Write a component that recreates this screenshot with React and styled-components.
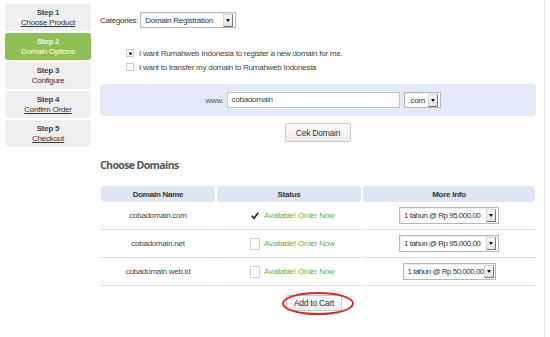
import React from 'react';
import styled, { createGlobalStyle } from 'styled-components';

const Global = createGlobalStyle`
  html, body { margin: 0; padding: 0; background: #fff; }
  body {
    font-family: "Liberation Sans", Arial, sans-serif;
    font-size: 8px;
    letter-spacing: -0.25px;
    color: #333;
  }
`;

const Page = styled.div`
  display: flex;
  width: 545px;
  height: 337px;
  border-right: 1px solid #e8e8e8;
  padding: 4px 0 0 5px;
  box-sizing: border-box;
  gap: 9px;
`;

const Sidebar = styled.div`
  width: 86px;
  display: flex;
  flex-direction: column;
  gap: 2px;
`;

const StepBox = styled.div`
  height: 27px;
  border-radius: 3px;
  background: ${(p) => (p.active ? '#8dbf55' : '#efefef')};
  color: ${(p) => (p.active ? '#fff' : '#333')};
  display: flex;
  flex-direction: column;
  align-items: center;
  justify-content: center;
  line-height: 10px;
  b { font-weight: bold; color: ${(p) => (p.active ? '#f3f9ea' : '#444')}; }
  span { text-decoration: ${(p) => (p.link ? 'underline' : 'none')}; }
`;

const Main = styled.div`
  width: 436px;
  display: flex;
  flex-direction: column;
`;

const CatRow = styled.div`
  display: flex;
  align-items: center;
  gap: 2px;
  margin-top: 8px;
  height: 16px;
`;

const SelectBox = styled.div`
  display: flex;
  align-items: center;
  justify-content: space-between;
  white-space: nowrap;
  width: ${(p) => p.w}px;
  height: ${(p) => p.h || 16}px;
  border: 1px solid #b8b8b8;
  background: #fff;
  box-sizing: border-box;
  padding-left: 4px;
  color: #333;
  letter-spacing: ${(p) => (p.tight ? '-0.5px' : 'inherit')};
  box-shadow: inset 1px 1px 0 #eee;
`;

const Arrow = styled.div`
  width: 8px;
  height: 11px;
  margin-right: 2px;
  flex-shrink: 0;
  background: linear-gradient(#fafafa, #e2e2e2);
  border: 1px solid #d6d6d6;
  border-right-color: #777;
  border-bottom-color: #777;
  display: flex;
  align-items: center;
  justify-content: center;
  &::after {
    content: '';
    border-left: 2px solid transparent;
    border-right: 2px solid transparent;
    border-top: 3px solid #111;
  }
`;

const Radios = styled.div`
  display: flex;
  flex-direction: column;
  gap: 4px;
  margin: 20px 0 0 26px;
`;

const RadioRow = styled.label`
  display: flex;
  align-items: center;
  gap: 5px;
  height: 10px;
  color: #444;
`;

const Radio = styled.span`
  width: 6px;
  height: 6px;
  border: 1px solid #c8c8c8;
  background: #fff;
  display: flex;
  align-items: center;
  justify-content: center;
  &::after {
    content: '';
    width: 3px;
    height: 3px;
    border-radius: 50%;
    background: ${(p) => (p.checked ? '#333' : 'transparent')};
  }
`;

const DomainBar = styled.div`
  margin-top: 12px;
  height: 32px;
  border-radius: 4px;
  background: #e4e9f6;
  display: flex;
  align-items: center;
  justify-content: center;
  gap: 3px;
  padding-left: 10px;
`;

const Www = styled.span`
  color: #555;
`;

const TextInput = styled.div`
  width: 173px;
  height: 16px;
  border: 1px solid #c4c4c4;
  background: #fff;
  box-sizing: border-box;
  padding: 2px 4px;
  color: #444;
  margin-right: 1px;
`;

const Button = styled.div`
  align-self: center;
  padding: 0 ${(p) => p.px || 10}px;
  height: ${(p) => p.h || 17}px;
  border: 1px solid #c8c8c8;
  border-radius: 2px;
  background: linear-gradient(#fdfdfd, #ececec);
  display: flex;
  align-items: center;
  color: #333;
  font-size: 8.5px;
`;

const Heading = styled.h2`
  margin: 16px 0 0 0;
  font-family: "Open Sans", sans-serif;
  font-size: 10.5px;
  font-weight: bold;
  color: #555;
  letter-spacing: -0.6px;
  line-height: 14px;
`;

const Table = styled.div`
  margin-top: 14px;
  display: grid;
  grid-template-columns: 114px 144px 172px;
  column-gap: 2px;
  padding-left: 1px;
`;

const Th = styled.div`
  height: 16px;
  border-radius: 3px;
  background: #dfe6f3;
  display: flex;
  align-items: center;
  justify-content: center;
  font-weight: bold;
  color: #333;
`;

const Td = styled.div`
  height: 27px;
  border-bottom: 1px solid #dcdcdc;
  display: flex;
  align-items: center;
  justify-content: center;
  gap: 4px;
  color: #444;
`;

const StatusCell = styled(Td)`
  justify-content: flex-start;
  gap: 3px;
  padding-left: 33px;
  color: #6cb33f;
`;

const Check = styled.span`
  width: 8px;
  height: 10px;
  border: 1px solid ${(p) => (p.checked ? 'transparent' : '#d4d4d4')};
  display: flex;
  align-items: center;
  justify-content: center;
  margin-right: 1px;
`;

const CartWrap = styled.div`
  position: relative;
  align-self: center;
  margin-top: 9px;
  margin-left: -8px;
`;

const Ellipse = styled.div`
  position: absolute;
  left: -4px;
  right: -12px;
  top: -3px;
  bottom: -4px;
  border: 2px solid #d42a2a;
  border-radius: 50%;
`;

const steps = [
  { n: 1, label: 'Choose Product', link: true },
  { n: 2, label: 'Domain Options', active: true },
  { n: 3, label: 'Configure' },
  { n: 4, label: 'Confirm Order', link: true },
  { n: 5, label: 'Checkout', link: true },
];

const domains = [
  { name: 'cobadomain.com', checked: true, price: '1 tahun @ Rp 95.000,00', w: 100 },
  { name: 'cobadomain.net', price: '1 tahun @ Rp 95.000,00', w: 100 },
  { name: 'cobadomain.web.id', price: '1 tahun @ Rp 50.000,00', w: 93 },
];

function App() {
  return (
    <>
      <Global />
      <Page>
        <Sidebar>
          {steps.map((s) => (
            <StepBox key={s.n} active={s.active} link={s.link}>
              <b>Step {s.n}</b>
              <span>{s.label}</span>
            </StepBox>
          ))}
        </Sidebar>
        <Main>
          <CatRow>
            <span>Categories:</span>
            <SelectBox w={96}>
              Domain Registration
              <Arrow />
            </SelectBox>
          </CatRow>
          <Radios>
            <RadioRow>
              <Radio checked />
              I want Rumahweb Indonesia to register a new domain for me.
            </RadioRow>
            <RadioRow>
              <Radio />
              I want to transfer my domain to Rumahweb Indonesia
            </RadioRow>
          </Radios>
          <DomainBar>
            <Www>www.</Www>
            <TextInput>cobadomain</TextInput>
            <SelectBox w={37}>
              .com
              <Arrow />
            </SelectBox>
          </DomainBar>
          <div style={{ height: 7 }} />
          <Button>Cek Domain</Button>
          <Heading>Choose Domains</Heading>
          <Table>
            <Th>Domain Name</Th>
            <Th>Status</Th>
            <Th>More Info</Th>
            {domains.map((d) => (
              <React.Fragment key={d.name}>
                <Td>{d.name}</Td>
                <StatusCell>
                  <Check checked={d.checked}>
                    {d.checked && (
                      <svg width="9" height="9" viewBox="0 0 10 10">
                        <path d="M1 5.5 L3.8 8.5 L9 1.5" fill="none" stroke="#222" strokeWidth="2" />
                      </svg>
                    )}
                  </Check>
                  Available! Order Now
                </StatusCell>
                <Td>
                  <SelectBox w={d.w} h={17} tight>
                    {d.price}
                    <Arrow />
                  </SelectBox>
                </Td>
              </React.Fragment>
            ))}
          </Table>
          <CartWrap>
            <Button h={14} px={7}>Add to Cart</Button>
            <Ellipse />
          </CartWrap>
        </Main>
      </Page>
    </>
  );
}

export default App;
